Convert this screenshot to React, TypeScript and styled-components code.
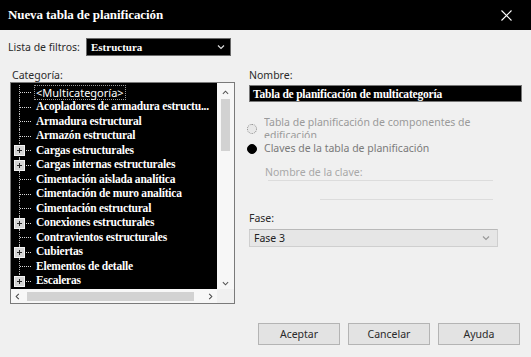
import * as React from "react";
import styled, { createGlobalStyle } from "styled-components";

const GlobalStyle = createGlobalStyle`
  html, body {
    margin: 0;
    padding: 0;
    background: #f0f0f0;
  }
  body {
    font-family: "Noto Sans", "Liberation Sans", sans-serif;
  }
`;

const Dialog = styled.div`
  width: 531px;
  height: 357px;
  display: flex;
  flex-direction: column;
  background: #f0f0f0;
  overflow: hidden;
`;

const TitleBar = styled.header`
  height: 30px;
  flex: 0 0 30px;
  background: #000;
  display: flex;
  align-items: center;
  justify-content: space-between;
  padding: 0 19px 0 8px;
  box-sizing: border-box;
  h1 {
    margin: 0;
    font-family: "Liberation Serif", serif;
    font-weight: 700;
    font-size: 13px;
    color: #fff;
    letter-spacing: -0.1px;
  }
`;

const Content = styled.main`
  padding: 8px 9px 0 8px;
`;

const FilterRow = styled.div`
  display: flex;
  align-items: center;
  height: 18px;
`;

const Label = styled.label`
  display: block;
  font-size: 10.5px;
  line-height: 14px;
  color: #2b2b2b;
`;

const FilterLabel = styled(Label)`
  width: 78px;
`;

const DarkSelect = styled.div`
  width: 145px;
  height: 18px;
  box-sizing: border-box;
  background: #000;
  border: 1px solid #6a6a6a;
  display: flex;
  align-items: center;
  justify-content: space-between;
  padding: 0 5px 0 4px;
  font-family: "Liberation Serif", serif;
  font-weight: 700;
  font-size: 11px;
  color: #fff;
`;

const Columns = styled.div`
  display: flex;
  margin-top: 12px;
  gap: 14px;
`;

const LeftCol = styled.section`
  width: 225px;
  margin-left: 2px;
  ${Label} {
    padding-left: 2px;
  }
`;

const RightCol = styled.section`
  width: 273px;
  display: flex;
  flex-direction: column;
`;

const ListBox = styled.div`
  height: 222px;
  box-sizing: border-box;
  border: 1px solid #7a7a7a;
  display: grid;
  grid-template-columns: 1fr 17px;
  grid-template-rows: 1fr 14px;
  background: #f5f5f5;
`;

const Tree = styled.ul`
  list-style: none;
  margin: 0;
  padding: 2px 0 0;
  background: #000;
  overflow: hidden;
`;

const Row = styled.li`
  height: 14.5px;
  display: flex;
  align-items: center;
  white-space: nowrap;
`;

const Connector = styled.span<{ $last?: boolean }>`
  position: relative;
  flex: 0 0 21px;
  height: 100%;
  &::before {
    content: "";
    position: absolute;
    left: 8px;
    top: 0;
    bottom: ${(p) => (p.$last ? "50%" : "0")};
    border-left: 1px dotted #b8b8b8;
  }
  &::after {
    content: "";
    position: absolute;
    left: 9px;
    width: 11px;
    top: 50%;
    border-top: 1px dotted #d8d8d8;
  }
`;

const Expander = styled.span`
  position: absolute;
  z-index: 1;
  left: 3px;
  top: 50%;
  margin-top: -5px;
  width: 11px;
  height: 11px;
  box-sizing: border-box;
  background: #d4d4d4;
  border: 1px solid #f4f4f4;
  &::before,
  &::after {
    content: "";
    position: absolute;
    background: #222;
  }
  &::before {
    left: 2px;
    right: 2px;
    top: 4px;
    height: 1px;
  }
  &::after {
    top: 2px;
    bottom: 2px;
    left: 4px;
    width: 1px;
  }
`;

const ItemText = styled.span<{ $plain?: boolean }>`
  margin-left: 2px;
  color: #fff;
  font-family: ${(p) =>
    p.$plain ? `"Noto Sans", "Liberation Sans", sans-serif` : `"Liberation Serif", serif`};
  font-weight: ${(p) => (p.$plain ? 400 : 700)};
  font-size: ${(p) => (p.$plain ? "11px" : "11.5px")};
  letter-spacing: ${(p) => (p.$plain ? "0" : "-0.2px")};
  line-height: 13px;
  padding: 0 1px;
  border: 1px dotted ${(p) => (p.$plain ? "#9a9a9a" : "transparent")};
`;

const VScroll = styled.div`
  display: flex;
  flex-direction: column;
  align-items: center;
  padding: 6px 0 2px;
  background: #f7f7f7;
`;

const HScroll = styled.div`
  display: flex;
  align-items: center;
  padding: 0 3px;
  gap: 4px;
  background: #f7f7f7;
`;

const Thumb = styled.div<{ $horizontal?: boolean }>`
  background: #d2d2d2;
  ${(p) =>
    p.$horizontal
      ? "flex: 1; height: 9px; margin: 0 9px 0 2px;"
      : "width: 9px; height: 52px; margin-top: 3px;"}
`;

const Arrow = styled.span`
  display: flex;
  color: #555;
`;

const Spacer = styled.div`
  flex: 1;
`;

const Corner = styled.div`
  background: #f0f0f0;
`;

const NameInput = styled.div`
  margin-top: 3px;
  height: 17px;
  box-sizing: border-box;
  background: #000;
  border: 1px solid #777;
  padding: 0 3px;
  display: flex;
  align-items: center;
  font-family: "Liberation Serif", serif;
  font-weight: 700;
  font-size: 11.5px;
  letter-spacing: -0.2px;
  color: #fff;
`;

const RadioRow = styled.div<{ $tall?: boolean }>`
  display: flex;
  align-items: center;
  height: ${(p) => (p.$tall ? "26px" : "14px")};
  margin-top: ${(p) => (p.$tall ? "13.5px" : "0")};
  margin-left: -2px;
`;

const RadioDot = styled.span<{ $checked?: boolean }>`
  flex: 0 0 10px;
  width: 10px;
  height: 10px;
  box-sizing: border-box;
  border-radius: 50%;
  border: 1px ${(p) => (p.$checked ? "solid #000" : "dotted #8a8a8a")};
  background: ${(p) => (p.$checked ? "#000" : "#e8e8e8")};
  margin-right: 7px;
`;

const RadioText = styled.span<{ $clip?: boolean }>`
  font-size: 10.5px;
  line-height: 13px;
  color: ${(p) => (p.$clip ? "#9a9a9a" : "#7a7a7a")};
  ${(p) => (p.$clip ? "height: 22px; overflow: hidden; align-self: flex-start;" : "")}
`;

const KeyName = styled.div`
  margin-top: 10px;
  margin-left: 16px;
  width: 228px;
  font-size: 10.5px;
  line-height: 13px;
  color: #a8a8a8;
`;

const Rule = styled.div<{ $indent: number; $gap: number }>`
  height: 1px;
  background: #dcdcdc;
  margin-top: ${(p) => p.$gap}px;
  margin-left: ${(p) => p.$indent}px;
  width: ${(p) => 244 - p.$indent}px;
`;

const FaseLabel = styled(Label)`
  margin-top: 11px;
`;

const LightSelect = styled.div`
  margin-top: 4px;
  width: 249px;
  height: 18px;
  box-sizing: border-box;
  background: #e6e6e6;
  border: 1px solid #cfcfcf;
  border-top-color: #b9b9b9;
  display: flex;
  align-items: center;
  justify-content: space-between;
  padding: 0 7px 0 4px;
  font-size: 10.5px;
  color: #222;
`;

const Footer = styled.footer`
  margin-top: auto;
  display: flex;
  justify-content: flex-end;
  gap: 8px;
  padding: 0 11px 12px 0;
`;

const Button = styled.button`
  width: 82px;
  height: 22px;
  background: #e3e3e3;
  border: 1px solid #b4b4b4;
  font-family: "Noto Sans", "Liberation Sans", sans-serif;
  font-size: 10.5px;
  color: #2a2a2a;
  padding: 0;
`;

const Chevron = ({ color, size = 8 }: { color: string; size?: number }) => (
  <svg width={size} height={size} viewBox="0 0 8 8">
    <path d="M1 2.5 L4 5.5 L7 2.5" fill="none" stroke={color} strokeWidth="1.2" />
  </svg>
);

const ChevronUp = ({ color }: { color: string }) => (
  <svg width={7} height={7} viewBox="0 0 8 8">
    <path d="M1 5.5 L4 2.5 L7 5.5" fill="none" stroke={color} strokeWidth="1.2" />
  </svg>
);

const Side = ({ left }: { left?: boolean }) => (
  <svg width={7} height={7} viewBox="0 0 8 8">
    <path
      d={left ? "M5.5 1 L2.5 4 L5.5 7" : "M2.5 1 L5.5 4 L2.5 7"}
      fill="none"
      stroke="#444"
      strokeWidth="1.2"
    />
  </svg>
);

type Item = { label: string; expandable?: boolean; plain?: boolean };

const items: Item[] = [
  { label: "<Multicategoría>", plain: true },
  { label: "Acopladores de armadura estructu..." },
  { label: "Armadura estructural" },
  { label: "Armazón estructural" },
  { label: "Cargas estructurales", expandable: true },
  { label: "Cargas internas estructurales", expandable: true },
  { label: "Cimentación aislada analítica" },
  { label: "Cimentación de muro analítica" },
  { label: "Cimentación estructural" },
  { label: "Conexiones estructurales", expandable: true },
  { label: "Contravientos estructurales" },
  { label: "Cubiertas", expandable: true },
  { label: "Elementos de detalle" },
  { label: "Escaleras", expandable: true },
];

const App: React.FC = () => {
  return (
    <Dialog>
      <GlobalStyle />
      <TitleBar>
        <h1>Nueva tabla de planificación</h1>
        <svg width="11" height="11" viewBox="0 0 11 11">
          <path d="M0.5 0.5 L10.5 10.5 M10.5 0.5 L0.5 10.5" stroke="#fff" strokeWidth="1.1" />
        </svg>
      </TitleBar>
      <Content>
        <FilterRow>
          <FilterLabel>Lista de filtros:</FilterLabel>
          <DarkSelect>
            <span>Estructura</span>
            <Chevron color="#ddd" />
          </DarkSelect>
        </FilterRow>
        <Columns>
          <LeftCol>
            <Label>Categoría:</Label>
            <ListBox>
              <Tree>
                {items.map((it, i) => (
                  <Row key={it.label}>
                    <Connector $last={i === items.length - 1}>
                      {it.expandable && <Expander />}
                    </Connector>
                    <ItemText $plain={it.plain}>{it.label}</ItemText>
                  </Row>
                ))}
              </Tree>
              <VScroll>
                <Arrow>
                  <ChevronUp color="#555" />
                </Arrow>
                <Thumb />
                <Spacer />
                <Arrow>
                  <Chevron color="#555" size={7} />
                </Arrow>
              </VScroll>
              <HScroll>
                <Arrow>
                  <Side left />
                </Arrow>
                <Thumb $horizontal />
                <Arrow>
                  <Side />
                </Arrow>
              </HScroll>
              <Corner />
            </ListBox>
          </LeftCol>
          <RightCol>
            <Label>Nombre:</Label>
            <NameInput>Tabla de planificación de multicategoría</NameInput>
            <RadioRow $tall>
              <RadioDot />
              <RadioText $clip>
                Tabla de planificación de componentes de
                <br />
                edificación
              </RadioText>
            </RadioRow>
            <RadioRow>
              <RadioDot $checked />
              <RadioText>Claves de la tabla de planificación</RadioText>
            </RadioRow>
            <KeyName>Nombre de la clave:</KeyName>
            <Rule $indent={19} $gap={1} />
            <Rule $indent={71} $gap={18} />
            <FaseLabel>Fase:</FaseLabel>
            <LightSelect>
              <span>Fase 3</span>
              <Chevron color="#999" />
            </LightSelect>
          </RightCol>
        </Columns>
      </Content>
      <Footer>
        <Button>Aceptar</Button>
        <Button>Cancelar</Button>
        <Button>Ayuda</Button>
      </Footer>
    </Dialog>
  );
};

export default App;
